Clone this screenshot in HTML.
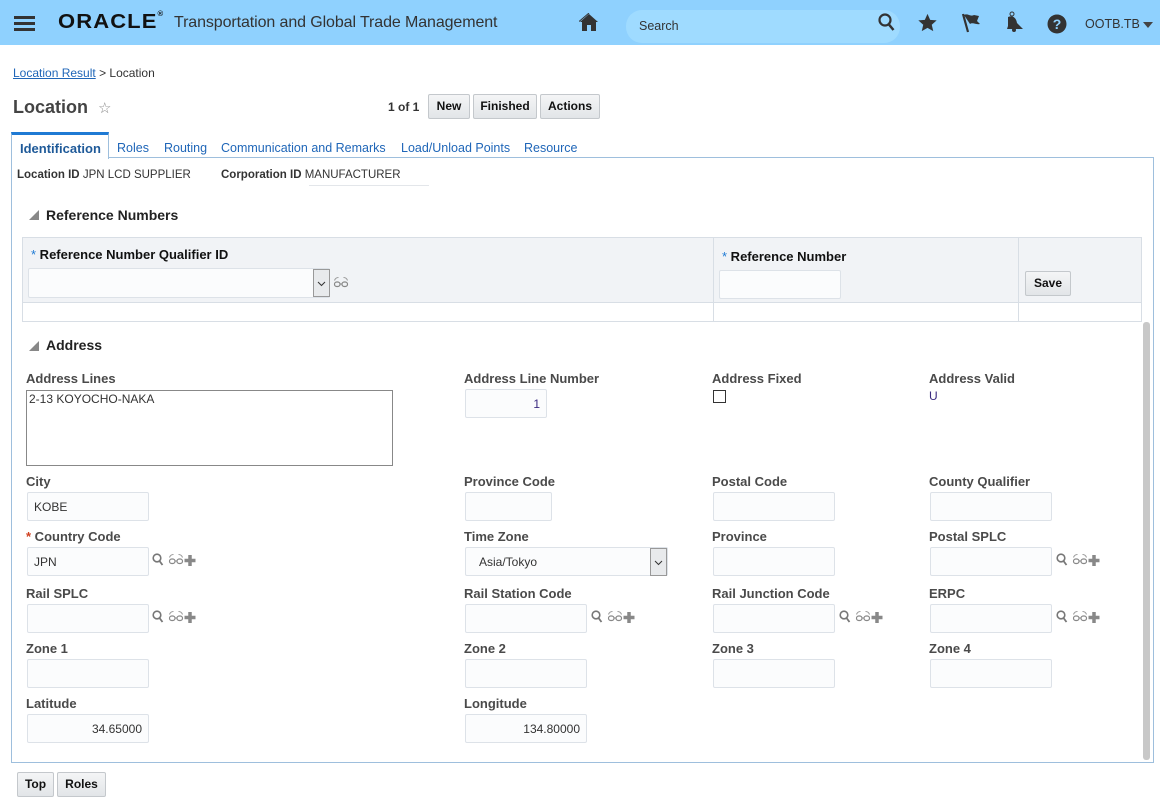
<!DOCTYPE html>
<html><head><meta charset="utf-8"><style>
*{box-sizing:border-box;margin:0;padding:0}
body{width:1160px;height:802px;position:relative;background:#fff;font-family:"Liberation Sans",sans-serif;overflow:hidden;color:#333}
.a{position:absolute}
.hdr{left:0;top:0;width:1160px;height:45px;background:#8fd1fe}
.lbl{position:absolute;font-size:13px;font-weight:bold;color:#4a4a4a;white-space:nowrap}
.inp{position:absolute;height:29px;background:#fbfcfd;border:1px solid #dde2e8;border-radius:2px;font-size:12px;color:#333;padding:7px 6px}
.btn{position:absolute;height:25px;background:linear-gradient(#f4f5f6,#e2e5e8);border:1px solid #c4c8cc;border-radius:2px;font-size:12px;font-weight:bold;color:#111;text-align:center;line-height:23px}
.tab{position:absolute;top:141px;font-size:12.5px;color:#1f66b8}
.ic{position:absolute}
.dd{position:absolute;width:17px;height:28px;background:#e8eaec;border:1px solid #999}
</style></head><body>
<div class="a hdr"></div>
<div class="a" style="left:14px;top:16px;width:21px;height:3px;background:#333;box-shadow:0 6px 0 #333,0 12px 0 #333"></div>
<div class="a" style="left:58px;top:11px;font-size:20px;font-weight:bold;letter-spacing:1px;color:#111;transform:scaleX(1.1);transform-origin:left">ORACLE<span style="font-size:7px;vertical-align:top">®</span></div>
<div class="a" style="left:174px;top:14px;font-size:16px;color:#333;letter-spacing:-0.1px">Transportation and Global Trade Management</div>
<svg class="ic" style="left:579px;top:13px" width="20" height="19" viewBox="0 0 20 19"><path d="M10 1L1 9h2v9h5v-6h4v6h5V9h2z" fill="#333"/><path d="M10 0L0 8.5" stroke="#333"/></svg>
<div class="a" style="left:626px;top:10px;width:274px;height:33px;background:#9fdbff;border-radius:16px"></div>
<div class="a" style="left:639px;top:19px;font-size:12.5px;color:#333">Search</div>
<svg class="ic" style="left:877px;top:12px" width="20" height="22"><circle cx="8" cy="8" r="5.5" stroke="#333" stroke-width="2.2" fill="none"/><path d="M11.5 12l5 6" stroke="#333" stroke-width="2.5"/></svg>
<svg class="ic" style="left:917px;top:13px" width="21" height="20" viewBox="0 0 24 24"><path d="M12 1l3.2 7.2 7.8.7-5.9 5.2 1.8 7.7L12 17.8 5.1 21.8l1.8-7.7L1 8.9l7.8-.7z" fill="#333"/></svg>
<svg class="ic" style="left:960px;top:12px" width="22" height="22"><path d="M3 2l5 18" stroke="#333" stroke-width="2.2"/><path d="M4 3c4-2 6 2 10 0l5 1-2 5 3 3c-4 1-7-2-10 0z" fill="#333"/></svg>
<svg class="ic" style="left:1004px;top:11px" width="20" height="22"><circle cx="8" cy="3" r="2" fill="none" stroke="#333"/><path d="M4 6c4-2 8 0 9 6l6 6H3l1-3z" fill="#333"/><circle cx="10" cy="19" r="2" fill="#333"/></svg>
<svg class="ic" style="left:1047px;top:14px" width="20" height="20"><circle cx="10" cy="10" r="9.5" fill="#333"/><text x="10" y="15" font-family="Liberation Sans" font-weight="bold" font-size="14" fill="#8fd1fe" text-anchor="middle">?</text></svg>
<div class="a" style="left:1085px;top:17px;font-size:12.5px;color:#333">OOTB.TB</div>
<div class="a" style="left:1143px;top:22px;border-left:5px solid transparent;border-right:5px solid transparent;border-top:6px solid #444"></div>

<div class="a" style="left:13px;top:66px;font-size:12px"><span style="color:#1f66b8;text-decoration:underline">Location Result</span> <span style="color:#333">&gt; Location</span></div>
<div class="a" style="left:13px;top:97px;font-size:18px;font-weight:bold;color:#444">Location</div>
<div class="a" style="left:98px;top:99px;font-size:15px;color:#888">☆</div>
<div class="a" style="left:388px;top:100px;font-size:12px;font-weight:bold;color:#333">1 of 1</div>
<div class="btn" style="left:428px;top:94px;width:42px">New</div>
<div class="btn" style="left:473px;top:94px;width:64px">Finished</div>
<div class="btn" style="left:540px;top:94px;width:60px">Actions</div>

<div class="a" style="left:11px;top:157px;width:1143px;height:606px;border:1px solid #9ebfdd"></div>
<div class="a" style="left:11px;top:132px;width:98px;height:27px;background:#fff;border:1px solid #9ebfdd;border-bottom:none;border-top:3px solid #1f7ad4"></div>
<div class="tab" style="left:20px;color:#1f5a99;font-weight:bold;font-size:13px">Identification</div>
<div class="tab" style="left:117px">Roles</div>
<div class="tab" style="left:164px">Routing</div>
<div class="tab" style="left:221px">Communication and Remarks</div>
<div class="tab" style="left:401px">Load/Unload Points</div>
<div class="tab" style="left:524px">Resource</div>

<div class="a" style="left:17px;top:169px;font-size:11.5px;color:#333"><b>Location ID</b> JPN LCD SUPPLIER</div>
<div class="a" style="left:221px;top:169px;font-size:11.5px;color:#333"><b>Corporation ID</b> MANUFACTURER</div>
<div class="a" style="left:309px;top:185px;width:120px;height:1px;background:#e3e6ea"></div>

<div class="a" style="left:29px;top:210px;border-left:10px solid transparent;border-bottom:10px solid #888"></div>
<div class="a" style="left:46px;top:207px;font-size:14px;font-weight:bold;color:#222">Reference Numbers</div>
<div class="a" style="left:22px;top:237px;width:1120px;height:85px;border:1px solid #d8dee5;background:#fff"></div>
<div class="a" style="left:23px;top:238px;width:1118px;height:65px;background:#f1f3f6;border-bottom:1px solid #d8dee5"></div>
<div class="a" style="left:713px;top:238px;width:1px;height:83px;background:#d8dee5"></div>
<div class="a" style="left:1018px;top:238px;width:1px;height:83px;background:#d8dee5"></div>
<div class="lbl" style="left:31px;top:247px;color:#111"><span style="color:#1f7ad4;font-weight:normal">*</span> Reference Number Qualifier ID</div>
<div class="inp" style="left:28px;top:268px;width:302px;height:30px"></div>
<div class="dd" style="left:313px;top:269px"><svg width="15" height="26"><path d="M4 12l3.5 3.5L11 12" stroke="#333" fill="none"/></svg></div>
<div class="lbl" style="left:722px;top:249px;color:#111"><span style="color:#1f7ad4;font-weight:normal">*</span> Reference Number</div>
<div class="inp" style="left:719px;top:270px;width:122px;height:29px"></div>
<div class="btn" style="left:1025px;top:271px;width:46px">Save</div>

<div class="a" style="left:1143px;top:322px;width:7px;height:438px;background:#c8c8c8;border-radius:3px"></div>

<div class="a" style="left:29px;top:341px;border-left:10px solid transparent;border-bottom:10px solid #888"></div>
<div class="a" style="left:46px;top:337px;font-size:14px;font-weight:bold;color:#222">Address</div>

<div class="lbl" style="left:26px;top:371px">Address Lines</div>
<div class="a" style="left:26px;top:390px;width:367px;height:76px;border:1px solid #888;font-size:12px;padding:1px 2px">2-13 KOYOCHO-NAKA</div>
<div class="lbl" style="left:464px;top:371px">Address Line Number</div>
<div class="inp" style="left:465px;top:389px;width:82px;text-align:right;color:#3a2a80">1</div>
<div class="lbl" style="left:712px;top:371px">Address Fixed</div>
<div class="a" style="left:713px;top:390px;width:13px;height:13px;border:1px solid #333"></div>
<div class="lbl" style="left:929px;top:371px">Address Valid</div>
<div class="a" style="left:929px;top:389px;font-size:12px;color:#3a2a80">U</div>

<div class="lbl" style="left:26px;top:474px">City</div>
<div class="inp" style="left:27px;top:492px;width:122px">KOBE</div>
<div class="lbl" style="left:464px;top:474px">Province Code</div>
<div class="inp" style="left:465px;top:492px;width:87px"></div>
<div class="lbl" style="left:712px;top:474px">Postal Code</div>
<div class="inp" style="left:713px;top:492px;width:122px"></div>
<div class="lbl" style="left:929px;top:474px">County Qualifier</div>
<div class="inp" style="left:930px;top:492px;width:122px"></div>

<div class="lbl" style="left:26px;top:529px"><span style="color:#d0401f">*</span> Country Code</div>
<div class="inp" style="left:27px;top:547px;width:122px">JPN</div>
<div class="lbl" style="left:464px;top:529px">Time Zone</div>
<div class="inp" style="left:465px;top:547px;width:203px;padding-left:13px">Asia/Tokyo</div>
<div class="dd" style="left:650px;top:548px"><svg width="15" height="26"><path d="M4 12l3.5 3.5L11 12" stroke="#333" fill="none"/></svg></div>
<div class="lbl" style="left:712px;top:529px">Province</div>
<div class="inp" style="left:713px;top:547px;width:122px"></div>
<div class="lbl" style="left:929px;top:529px">Postal SPLC</div>
<div class="inp" style="left:930px;top:547px;width:122px"></div>

<div class="lbl" style="left:26px;top:586px">Rail SPLC</div>
<div class="inp" style="left:27px;top:604px;width:122px"></div>
<div class="lbl" style="left:464px;top:586px">Rail Station Code</div>
<div class="inp" style="left:465px;top:604px;width:122px"></div>
<div class="lbl" style="left:712px;top:586px">Rail Junction Code</div>
<div class="inp" style="left:713px;top:604px;width:122px"></div>
<div class="lbl" style="left:929px;top:586px">ERPC</div>
<div class="inp" style="left:930px;top:604px;width:122px"></div>

<div class="lbl" style="left:26px;top:641px">Zone 1</div>
<div class="inp" style="left:27px;top:659px;width:122px"></div>
<div class="lbl" style="left:464px;top:641px">Zone 2</div>
<div class="inp" style="left:465px;top:659px;width:122px"></div>
<div class="lbl" style="left:712px;top:641px">Zone 3</div>
<div class="inp" style="left:713px;top:659px;width:122px"></div>
<div class="lbl" style="left:929px;top:641px">Zone 4</div>
<div class="inp" style="left:930px;top:659px;width:122px"></div>

<div class="lbl" style="left:26px;top:696px">Latitude</div>
<div class="inp" style="left:27px;top:714px;width:122px;text-align:right">34.65000</div>
<div class="lbl" style="left:464px;top:696px">Longitude</div>
<div class="inp" style="left:465px;top:714px;width:122px;text-align:right">134.80000</div>

<svg width="0" height="0" style="position:absolute"><defs>
<g id="glass"><path d="M1.5 4.5c1-3 3-3 4-3M14.5 4.5c-1-3-3-3-4-3" stroke="#999" fill="none"/><rect x="1.5" y="6" width="5.5" height="4.5" rx="2.2" stroke="#888" stroke-width="1.2" fill="none"/><rect x="9" y="6" width="5.5" height="4.5" rx="2.2" stroke="#888" stroke-width="1.2" fill="none"/><path d="M7 8h2" stroke="#888"/></g>
<g id="tri"><circle cx="5" cy="5" r="3.8" stroke="#777" stroke-width="1.6" fill="none"/><path d="M7.5 8l3 4" stroke="#777" stroke-width="1.8"/><use href="#glass" x="16" y="0"/><path d="M38 2v11M32.5 7.5h11" stroke="#888" stroke-width="3.5"/></g>
</defs></svg>
<svg class="ic" style="left:333px;top:276px" width="17" height="12"><use href="#glass"/></svg>
<svg class="ic" style="left:152px;top:553px" width="46" height="16"><use href="#tri"/></svg>
<svg class="ic" style="left:152px;top:610px" width="46" height="16"><use href="#tri"/></svg>
<svg class="ic" style="left:591px;top:610px" width="46" height="16"><use href="#tri"/></svg>
<svg class="ic" style="left:839px;top:610px" width="46" height="16"><use href="#tri"/></svg>
<svg class="ic" style="left:1056px;top:553px" width="46" height="16"><use href="#tri"/></svg>
<svg class="ic" style="left:1056px;top:610px" width="46" height="16"><use href="#tri"/></svg>

<div class="btn" style="left:17px;top:772px;width:37px">Top</div>
<div class="btn" style="left:57px;top:772px;width:49px">Roles</div>
</body></html>
